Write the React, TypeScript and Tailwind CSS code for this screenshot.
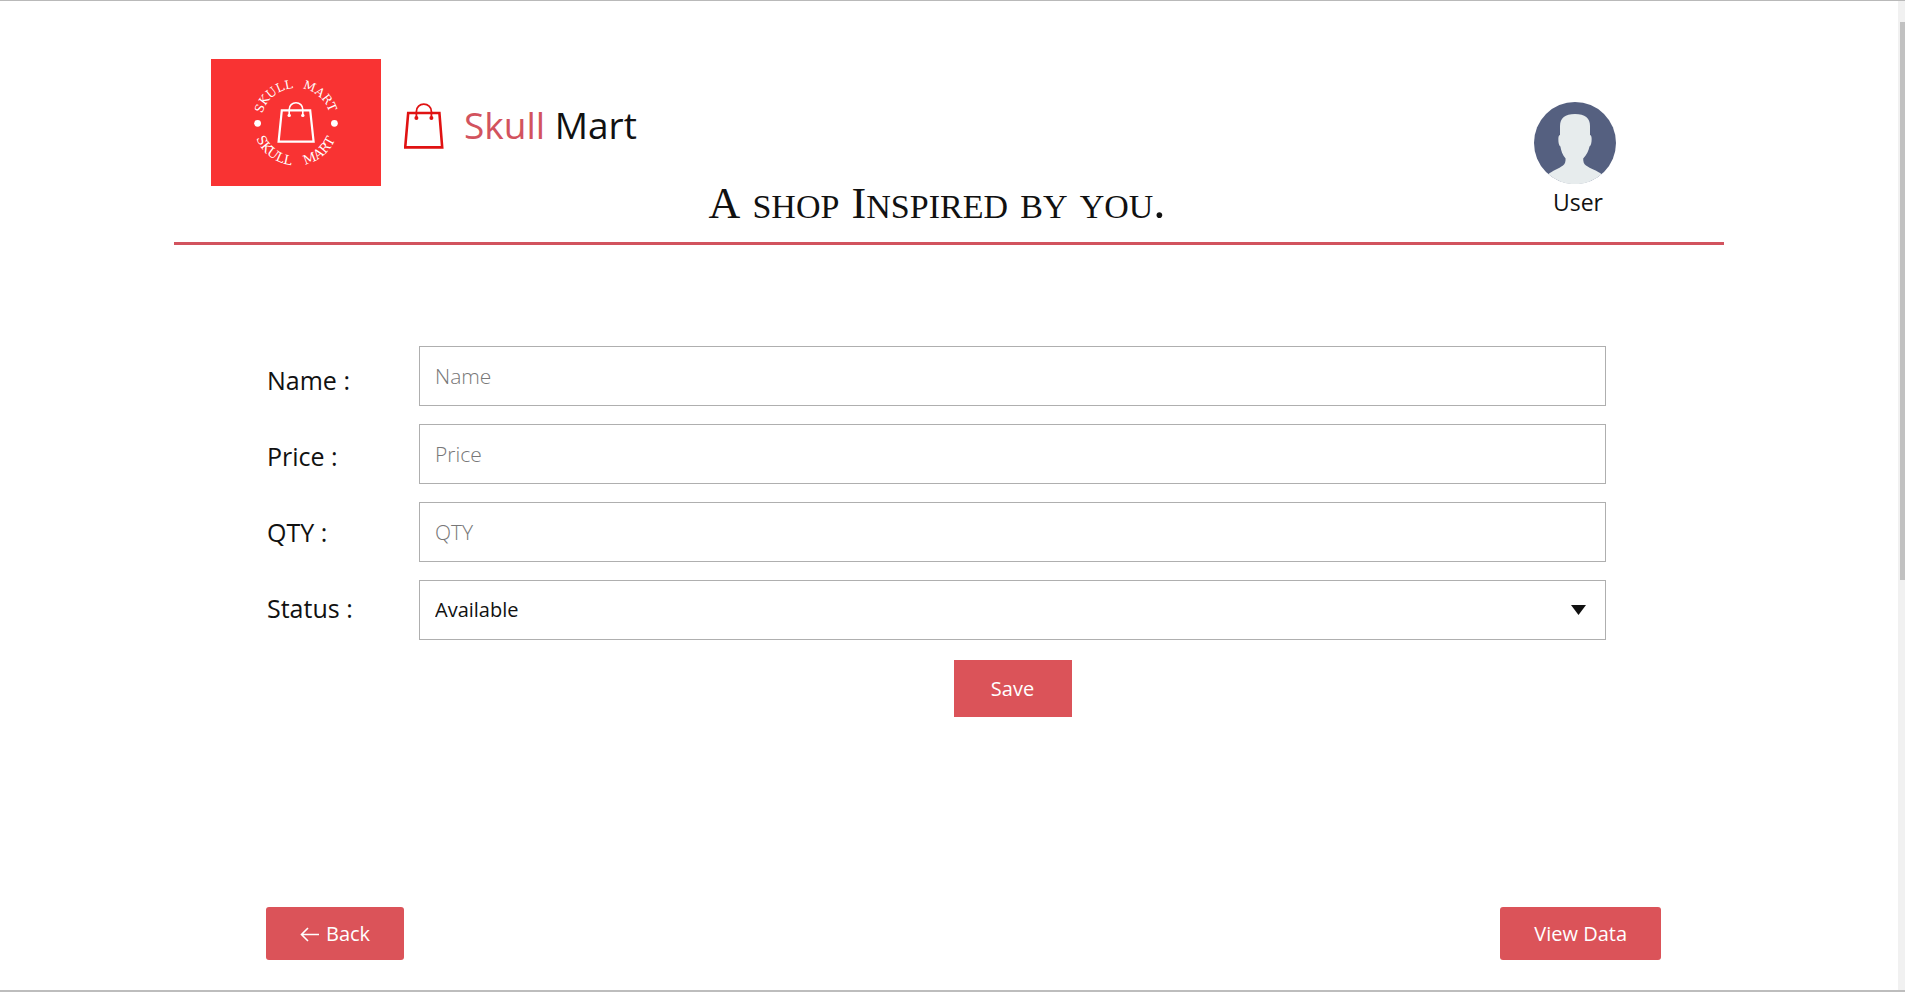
import type { ReactNode } from 'react';

function Bag({ className }: { className: string }) {
  return (
    <svg viewBox="0 0 40 46" className={className} fill="none" stroke="currentColor" aria-hidden="true">
      <path d="M4.2 10H35.4L38.2 44.4H1.2Z" strokeWidth="2.6" />
      <path d="M12.4 15V8.5C12.4 4 15.8 1.2 19.8 1.2S27.4 4 27.4 8.5V15" strokeWidth="1.8" />
      <circle cx="12.4" cy="15" r="2" fill="currentColor" stroke="none" />
      <circle cx="27.4" cy="15" r="2" fill="currentColor" stroke="none" />
    </svg>
  );
}

function LogoTile() {
  return (
    <div className="flex h-[127px] w-[170px] items-center justify-center bg-[#f93333] text-white">
      <svg viewBox="0 0 170 127" className="h-full w-full" role="img" aria-label="Skull Mart logo">
        <defs>
          <path id="ring-top" d="M50 64A35 35 0 0 1 120 64" />
          <path id="ring-bottom" d="M42.5 64A42.5 42.5 0 0 0 127.5 64" />
        </defs>
        <g fill="#fff" fontFamily="'DejaVu Serif', serif" textAnchor="middle">
          <g fontSize="12">
            <text><textPath href="#ring-top" startOffset="28%">SKULL</textPath></text>
            <text><textPath href="#ring-top" startOffset="73%">MART</textPath></text>
          </g>
          <g fontSize="13">
            <text><textPath href="#ring-bottom" startOffset="29%">SKULL</textPath></text>
            <text><textPath href="#ring-bottom" startOffset="72%">MART</textPath></text>
          </g>
          <circle cx="46.6" cy="64.3" r="3.4" />
          <circle cx="123.4" cy="64.3" r="3.4" />
        </g>
        <g fill="none" stroke="#fff">
          <path d="M70.8 51.4H99.2L102.6 82.6H67.6Z" strokeWidth="2.2" />
          <path d="M78.2 57V50.5C78.2 46.5 81.2 43.8 85 43.8S91.8 46.5 91.8 50.5V57" strokeWidth="1.6" />
        </g>
        <circle cx="78.2" cy="56.4" r="1.7" fill="#fff" />
        <circle cx="91.8" cy="56.4" r="1.7" fill="#fff" />
      </svg>
    </div>
  );
}

function Avatar() {
  return (
    <svg viewBox="0 0 82 82" className="size-[82px]" aria-hidden="true">
      <circle cx="41" cy="41" r="41" fill="#556080" />
      <path
        fill="#e7eced"
        d="M14.3 72.3C18 69 25 66.5 29 63.5C31 62 31.6 60 31.6 56.5C28.5 53 27 48.5 26.4 44.5C24.6 43.5 24.2 39 24.4 36C24.5 34 25.2 33.3 26 33V24C26 16 31 12 41 12S56 16 56 24V33C56.8 33.3 57.5 34 57.6 36C57.8 39 57.2 43.5 55.5 44.5C54.8 48.5 52.5 53 49.2 56.5C49.2 60 49.8 62 52 63.5C56 66.5 64 69 67.7 72.3A41 41 0 0 1 14.3 72.3Z"
      />
    </svg>
  );
}

const labelClass = 'text-[25px] leading-9';
const fieldClass =
  'h-[60px] w-full border border-[#afafaf] bg-white px-[15px] text-[#111] outline-none';
const inputClass = `${fieldClass} text-[21px] font-light placeholder:text-[#777]`;

function ActionButton({ children }: { children: ReactNode }) {
  return (
    <button type="button" className="flex h-[53px] items-center gap-1.5 rounded-[3px] bg-[#db5359] px-[34px] text-xl text-white">
      {children}
    </button>
  );
}

export default function App() {
  return (
    <div className="flex min-h-screen border-t border-b-2 border-t-[#b9b9b9] border-b-[#bdbdbd] bg-white font-['Open_Sans',sans-serif] text-[#111]">
      <main className="flex min-w-0 flex-1 flex-col px-[174px]">
        <header className="grid grid-cols-[1fr_auto_1fr] border-b-3 border-[#d2535e] pt-[58px] pr-[61px] pl-[37px]">
          <div className="flex h-[183px] items-start">
            <LogoTile />
            <a href="#home" className="mt-9 ml-[23px] flex items-center gap-5 whitespace-nowrap text-[37px] leading-[60px]">
              <Bag className="mt-0.5 h-[46px] w-10 text-[#e01212]" />
              <span>
                <span className="text-[#d2535e]">Skull</span> Mart
              </span>
            </a>
          </div>
          <p className="self-end pb-3 font-['Liberation_Serif',serif] text-[49px] leading-[52px] whitespace-nowrap [font-variant:small-caps]">
            <span className="text-[44px]">A</span> shop <span className="text-[44px]">I</span>nspired by you.
          </p>
          <div className="mt-[43px] mr-[47px] flex flex-col items-center justify-self-end">
            <Avatar />
            <span className="pl-1.5 text-[23px] leading-9">User</span>
          </div>
        </header>

        <form className="flex gap-[18px] pt-[101px] pr-[118px] pl-[93px]" onSubmit={(e) => e.preventDefault()}>
          <div className="flex w-[134px] shrink-0 flex-col gap-10 pt-4">
            <label htmlFor="name" className={labelClass}>Name :</label>
            <label htmlFor="price" className={labelClass}>Price :</label>
            <label htmlFor="qty" className={labelClass}>QTY :</label>
            <label htmlFor="status" className={labelClass}>Status :</label>
          </div>
          <div className="flex flex-1 flex-col gap-[18px]">
            <input id="name" type="text" placeholder="Name" className={inputClass} />
            <input id="price" type="text" placeholder="Price" className={inputClass} />
            <input id="qty" type="text" placeholder="QTY" className={inputClass} />
            <div className="relative">
              <select id="status" className={`${fieldClass} appearance-none text-xl`}>
                <option>Available</option>
                <option>Unavailable</option>
              </select>
              <svg viewBox="0 0 15 10" className="pointer-events-none absolute top-[25px] right-5 h-2.5 w-[15px]" aria-hidden="true">
                <path d="M0 0H15L7.5 10Z" fill="#111" />
              </svg>
            </div>
            <button type="submit" className="mt-0.5 h-[57px] w-[118px] self-center bg-[#db5359] text-xl text-white">
              Save
            </button>
          </div>
        </form>

        <nav className="mt-auto flex justify-between pr-[63px] pb-[30px] pl-[92px]">
          <ActionButton>
            <svg viewBox="0 0 20 16" className="h-4 w-5" fill="none" stroke="currentColor" strokeWidth="1.6" aria-hidden="true">
              <path d="M19 8.5H1.5M8 2L1.5 8.5L8 15" />
            </svg>
            Back
          </ActionButton>
          <ActionButton>View Data</ActionButton>
        </nav>
      </main>

      <div className="flex w-[7px] flex-col bg-[#f1f1f1] pt-[21px] pl-0.5" aria-hidden="true">
        <div className="h-[558px] bg-[#c1c1c1]" />
      </div>
    </div>
  );
}
